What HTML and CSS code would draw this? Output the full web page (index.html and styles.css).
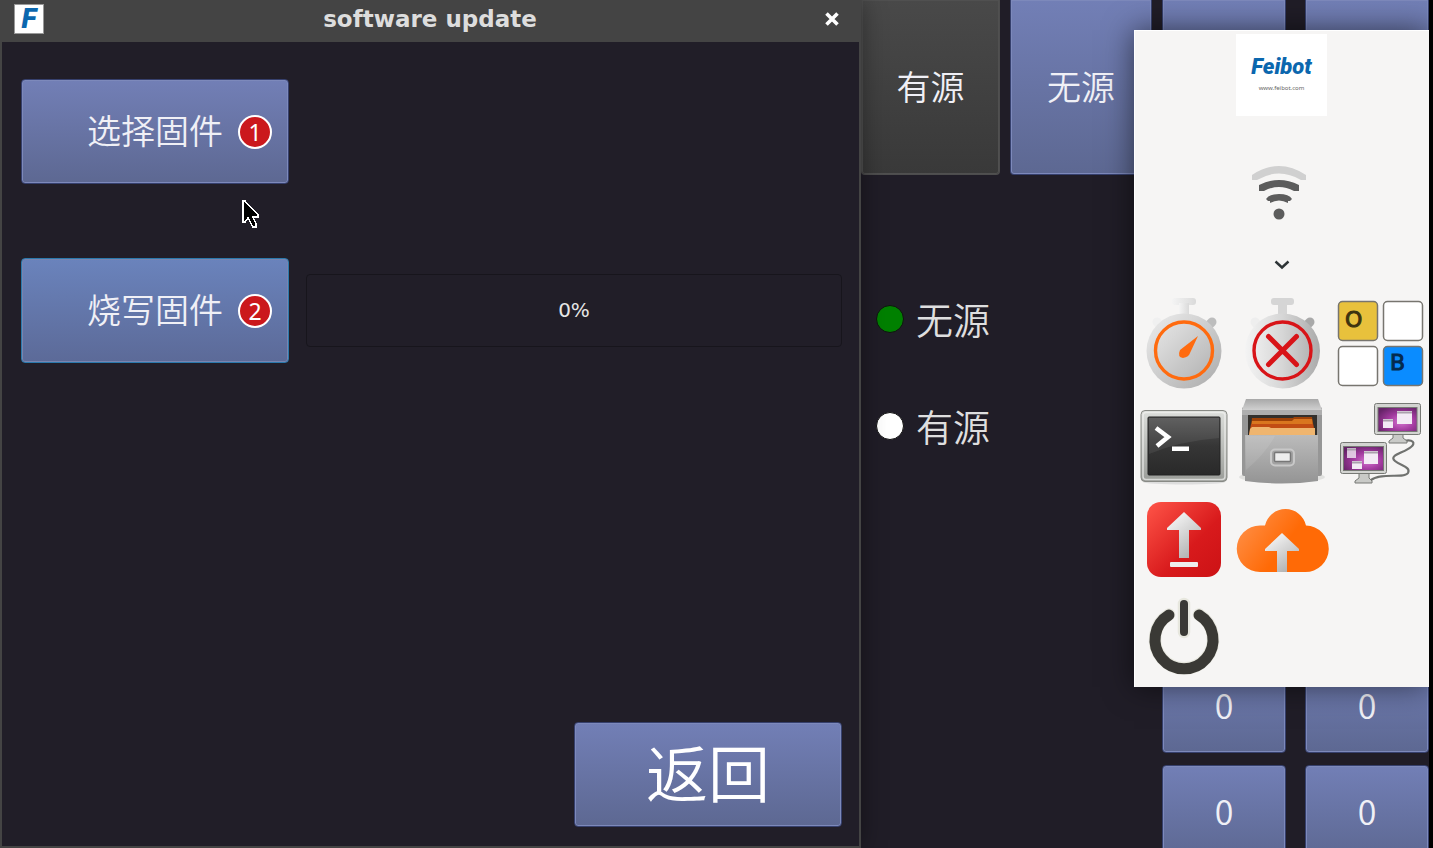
FILE: index.html
```
<!DOCTYPE html>
<html lang="zh-CN">

<head>
    <meta charset="UTF-8">
    <meta name="viewport" content="width=device-width, initial-scale=1.0">
    <title>software update</title>
    <link rel="stylesheet" href="styles.css">
</head>

<body>
    <div class="desktop">
        <section class="window" aria-labelledby="window-title">
            <header class="titlebar">
                <div class="app-icon" aria-hidden="true">F</div>
                <h1 id="window-title">software update</h1>
                <button class="close" type="button" aria-label="Close">
                    <svg width="16" height="16" viewBox="0 0 16 16"><path d="M2.500 2.500L13.500 13.500M13.500 2.500L2.500 13.500" stroke="#fff" stroke-width="3.600"/></svg>
                </button>
            </header>
            <div class="window-body">
                <button class="btn action" type="button">选择固件<span class="badge">1</span></button>
                <div class="flash-row">
                    <button class="btn action focused" type="button">烧写固件<span class="badge">2</span></button>
                    <div class="progress" role="progressbar" aria-valuenow="0" aria-valuemin="0" aria-valuemax="100">0%</div>
                </div>
                <button class="btn action back" type="button">返回</button>
            </div>
            <svg class="cursor" width="18" height="28" viewBox="0 0 18 28" shape-rendering="crispEdges" aria-hidden="true">
                <path d="M1 1V22H3L6 18L11 27H14V24L11 17H16V15L3 1Z" fill="#000" stroke="#fff" stroke-width="1.500"/>
            </svg>
        </section>

        <main class="main">
            <div class="modes">
                <div class="mode-buttons">
                    <button class="btn mode dark" type="button">有源</button>
                    <button class="btn mode" type="button">无源</button>
                </div>
                <div class="radios">
                    <label><input type="radio" name="source" checked>无源</label>
                    <label><input type="radio" name="source">有源</label>
                </div>
            </div>
            <div class="readers">
                <div class="reader-row">
                    <button class="btn mode" type="button" aria-label="Reader 1"></button>
                    <button class="btn mode" type="button" aria-label="Reader 2"></button>
                </div>
                <div class="counts">
                    <button class="btn" type="button">0</button>
                    <button class="btn" type="button">0</button>
                    <button class="btn" type="button">0</button>
                    <button class="btn" type="button">0</button>
                </div>
            </div>

            <aside class="menu">
                <div class="logo">
                    <div class="logo-name">Feibot</div>
                    <div class="logo-url">www.feibot.com</div>
                </div>
                <svg class="wifi" width="98" height="56" viewBox="0 0 98 56" role="img" aria-label="Wi-Fi">
                    <path d="M19 10Q46-8 73 10V15H68Q46 2 24 15H19Z" fill="#d0d0d0"/>
                    <path d="M26 20Q46 10 66 20V26H61Q46 18 31 26H26Z" fill="#5c5c5c"/>
                    <path d="M33 34Q36 29 46 29T59 34L57 36H55V38Q46 33 37 38V36H35Z" fill="#5c5c5c"/>
                    <circle cx="46" cy="49" r="5.500" fill="#5c5c5c"/>
                </svg>
                <button class="expand" type="button" aria-label="More">
                    <svg width="16" height="10" viewBox="0 0 16 10"><path d="M1.500 1.500L8 7.500L14.500 1.500" fill="none" stroke="#2e3436" stroke-width="2.400"/></svg>
                </button>
                <nav class="apps">
                    <button class="app" type="button" aria-label="Timer">
                        <svg viewBox="0 0 98 98">
                            <defs>
                                <linearGradient id="watch" x1="0" y1="0" x2="1" y2="1"><stop offset="0" stop-color="#eee"/><stop offset="1" stop-color="#aaa"/></linearGradient>
                                <linearGradient id="knob" x1="0" x2="1"><stop offset="0" stop-color="#f4f4f4"/><stop offset="1" stop-color="#dadada"/></linearGradient>
                            </defs>
                            <rect x="37" y="3" width="24" height="7" rx="3" fill="url(#knob)"/>
                            <rect x="44" y="8" width="10" height="13" fill="url(#knob)"/>
                            <path d="M71 33L77 27" stroke="#bdbdbd" stroke-width="9" stroke-linecap="round"/>
                            <path d="M27 33L22 27" stroke="#f0f0f0" stroke-width="9" stroke-linecap="round"/>
                            <circle cx="49" cy="56" r="37.500" fill="url(#watch)"/>
                            <circle cx="49" cy="55.500" r="28.500" fill="none" stroke="#ff6b0f" stroke-width="3.400"/>
                            <path d="M63 41L45 55Q42 62 48 63Q54 62 55 58Z" fill="#ff6b0f"/>
                        </svg>
                    </button>
                    <button class="app" type="button" aria-label="Stop timer">
                        <svg viewBox="0 0 98 98">
                            <defs>
                                <linearGradient id="watch2" x1="0" x2="1"><stop offset="0" stop-color="#f4f4f4"/><stop offset=".5" stop-color="#d6d6d6"/><stop offset="1" stop-color="#aaa"/></linearGradient>
                            </defs>
                            <rect x="38" y="3" width="23" height="7" rx="3" fill="#d5d5d5"/>
                            <rect x="45" y="8" width="9" height="13" fill="#d5d5d5"/>
                            <path d="M71 33L77 27" stroke="#a9a9a9" stroke-width="9" stroke-linecap="round"/>
                            <path d="M27 33L22 27" stroke="#eee" stroke-width="9" stroke-linecap="round"/>
                            <circle cx="49.500" cy="56" r="37.500" fill="url(#watch2)"/>
                            <circle cx="49.500" cy="55.500" r="28.500" fill="none" stroke="#d81418" stroke-width="3.400"/>
                            <path d="M35.500 41.500L63.500 69.500M63.500 41.500L35.500 69.500" stroke="#d81418" stroke-width="5" stroke-linecap="round"/>
                        </svg>
                    </button>
                    <button class="app" type="button" aria-label="Onboard keyboard">
                        <svg viewBox="0 0 98 98">
                            <g stroke="#77756f" stroke-width="1.500">
                                <rect x="7.500" y="6.500" width="39" height="39" rx="4" fill="#e8c13c"/>
                                <rect x="52.500" y="6.500" width="39" height="39" rx="4" fill="#fff"/>
                                <rect x="7.500" y="51.500" width="39" height="39" rx="4" fill="#fff"/>
                                <rect x="52.500" y="51.500" width="39" height="39" rx="4" fill="#0a8cff"/>
                            </g>
                            <text class="key" x="14" y="32" fill="#3d330f" stroke="#3d330f">O</text>
                            <text class="key" x="59" y="75" fill="#042a4d" stroke="#042a4d">B</text>
                        </svg>
                    </button>
                    <button class="app" type="button" aria-label="Terminal">
                        <svg viewBox="0 0 98 98">
                            <defs>
                                <linearGradient id="frame" x2="0" y2="1"><stop offset="0" stop-color="#dcdedb"/><stop offset="1" stop-color="#9a9c98"/></linearGradient>
                                <linearGradient id="screen" x2="0" y2="1"><stop offset="0" stop-color="#555"/><stop offset=".5" stop-color="#363636"/><stop offset="1" stop-color="#292929"/></linearGradient>
                            </defs>
                            <ellipse cx="49" cy="89" rx="41" ry="2.500" fill="#ddd"/>
                            <rect x="6" y="17.500" width="86" height="71" rx="4" fill="url(#frame)" stroke="#888a85"/>
                            <rect x="8" y="19.500" width="82" height="67" rx="3" fill="none" stroke="#f2f2f1" stroke-width="1.500" opacity=".7"/>
                            <rect x="13" y="24" width="72" height="58" rx="1" fill="url(#screen)" stroke="#222"/>
                            <path d="M14 25H84V45Q45 48 14 61Z" fill="#fff" opacity=".07"/>
                            <path d="M21 35L33 44L22 53" fill="none" stroke="#fff" stroke-width="4.500"/>
                            <rect x="37" y="53.500" width="17" height="4.500" fill="#fff"/>
                        </svg>
                    </button>
                    <button class="app" type="button" aria-label="Files">
                        <svg viewBox="0 0 98 98">
                            <defs>
                                <linearGradient id="drawer" x2="0" y2="1"><stop offset="0" stop-color="#bbb"/><stop offset="1" stop-color="#949494"/></linearGradient>
                                <linearGradient id="lid" x2="0" y2="1"><stop offset="0" stop-color="#a8a8a8"/><stop offset="1" stop-color="#d0d0d0"/></linearGradient>
                            </defs>
                            <ellipse cx="49" cy="84" rx="43" ry="6" fill="#e1e1df"/>
                            <rect x="9" y="14" width="80" height="69" rx="2" fill="#969696"/>
                            <path d="M13 6H85L89 17H9Z" fill="url(#lid)"/>
                            <rect x="9" y="17" width="80" height="5" fill="#aeaeae"/>
                            <rect x="15" y="22" width="69" height="20" fill="#33302c"/>
                            <path d="M19 25H60L61 24H79L82 42H17Z" fill="#9e4208"/>
                            <path d="M19 28H59L61 26H79L81 42H17Z" fill="#d9761f"/>
                            <path d="M18 31H80L82 42H16Z" fill="#c24d14"/>
                            <path d="M17 36L19 34H36L38 35H82V42H16Z" fill="#efb56f"/>
                            <path d="M12 42H85V88Q49 93 12 88Z" fill="url(#drawer)"/>
                            <path d="M13 43H42Q33 60 13 77Z" fill="#fff" opacity=".09"/>
                            <rect x="38" y="56.500" width="23" height="16" rx="4" fill="#a2a2a2" stroke="#c8c8c8" stroke-width="2"/>
                            <rect x="41.500" y="59.500" width="16" height="9" rx="1" fill="#ededed" stroke="#777" stroke-width="1.500"/>
                        </svg>
                    </button>
                    <button class="app" type="button" aria-label="Remote desktop">
                        <svg viewBox="0 0 98 98">
                            <defs>
                                <radialGradient id="purple" cx=".6" cy=".6" r=".7"><stop offset="0" stop-color="#d572d0"/><stop offset=".5" stop-color="#a23a9f"/><stop offset="1" stop-color="#662368"/></radialGradient>
                            </defs>
                            <path d="M73 48C82 46 85 50 80 54C73 60 57 62 64 68C70 73 80 74 77 80C73 86 51 79 40 87" fill="none" stroke="#70726f" stroke-width="2.200"/>
                            <g stroke="#777975">
                                <path d="M62 40H72V45L76 48V50H58V48L62 45Z" fill="#c9cac7"/>
                                <rect x="43.500" y="10.500" width="46" height="31" rx="2" fill="#d3d4d1"/>
                                <rect x="47" y="14.500" width="39" height="24" fill="url(#purple)"/>
                                <path d="M28 80H38V85L41 88V90H24V88L28 85Z" fill="#c9cac7"/>
                                <rect x="9.500" y="49.500" width="46" height="31" rx="2" fill="#d3d4d1"/>
                                <rect x="12.500" y="53.500" width="40" height="24" fill="url(#purple)"/>
                            </g>
                            <g fill="#f3eaf5">
                                <rect x="66" y="18" width="15" height="13"/>
                                <rect x="52" y="26" width="10" height="9"/>
                                <rect x="16" y="55" width="9" height="10" opacity=".8"/>
                                <rect x="33" y="58" width="14" height="13"/>
                                <rect x="21" y="68" width="10" height="8"/>
                            </g>
                            <path d="M66 19.500H81M52 27.500H62M33 59.500H47M21 69.500H31M16 56.500H25" stroke="#aaa0ac" stroke-width="2"/>
                        </svg>
                    </button>
                    <button class="app" type="button" aria-label="Software update">
                        <svg viewBox="0 0 98 98">
                            <defs>
                                <linearGradient id="red" x2="1" y2="1"><stop offset="0" stop-color="#ff5548"/><stop offset=".6" stop-color="#d81a1c"/><stop offset="1" stop-color="#cc1215"/></linearGradient>
                                <linearGradient id="arrow" x1="0" y1="0" x2=".6" y2="1"><stop offset="0" stop-color="#fff"/><stop offset="1" stop-color="#b4b4b4"/></linearGradient>
                            </defs>
                            <rect x="12" y="11" width="74" height="75" rx="14" fill="url(#red)"/>
                            <path d="M49 21L66 37V39H54V67H44V39H32V37Z" fill="url(#arrow)"/>
                            <rect x="35" y="71" width="28" height="5" rx="1" fill="#eee"/>
                        </svg>
                    </button>
                    <button class="app" type="button" aria-label="Cloud upload">
                        <svg viewBox="0 0 98 98">
                            <defs>
                                <linearGradient id="cloud" x2="1" y2=".5"><stop offset="0" stop-color="#ff9653"/><stop offset=".65" stop-color="#ff6a06"/></linearGradient>
                            </defs>
                            <path d="M27 81A23 23 0 0 1 27 34.500H32A21 21 0 0 1 73 34.500A23 23 0 0 1 72 81Z" fill="url(#cloud)"/>
                            <path d="M49 42L66 58V60H54V81H44V60H32V58Z" fill="url(#arrow)"/>
                        </svg>
                    </button>
                    <button class="app power" type="button" aria-label="Power">
                        <svg viewBox="0 0 98 98">
                            <path d="M34 25.500A29 29 0 1 0 64 25.500M49 15V43" fill="none" stroke="#deddce" stroke-width="12.500" stroke-linecap="round" opacity=".6"/>
                            <path d="M34 26A29 29 0 1 0 64 26" fill="none" stroke="#3a3935" stroke-width="11" stroke-linecap="round"/>
                            <path d="M49 15V43" stroke="#3a3935" stroke-width="8" stroke-linecap="round"/>
                        </svg>
                    </button>
                </nav>
            </aside>
        </main>
    </div>
</body>

</html>
```
FILE: styles.css
```
* {
    box-sizing: border-box;
}

body {
    margin: 0;
    background: #000;
    color: #f0f0f6;
    font-family: "Noto Sans CJK SC", "Noto Sans", sans-serif;
    font-weight: 350;
}

button {
    padding: 0;
    border: none;
    background: none;
    color: inherit;
    font: inherit;
    cursor: pointer;
}

svg {
    display: block;
}

.desktop {
    display: grid;
    grid-template-columns: 1fr 568px;
    height: 100vh;
    min-height: 720px;
    padding-right: 4px;
    overflow: hidden;
}

/* shared raised button */
.btn {
    padding-bottom: 3px;
    border: 1px solid #36406d;
    border-radius: 4px;
    background: linear-gradient(#727fb6, #5d6892);
    box-shadow: inset 0 0 0 1px #7d89bb;
    font-size: 34px;
    line-height: 48px;
}

.btn.dark {
    border-color: #4d4d4d;
    background: linear-gradient(#494949, #393939);
    box-shadow: inset 0 0 0 1px #505050;
}

.btn.focused {
    border-color: #2b79ac;
    background: linear-gradient(#6a83bc, #5c6a98);
    box-shadow: inset 0 0 0 1px #7885b0;
}

/* update window */
.window {
    position: relative;
    z-index: 1;
    display: flex;
    flex-direction: column;
    border: 2px solid #444;
    border-top: none;
    background: #211e28;
    box-shadow: 0 0 24px rgba(0, 0, 0, 0.4);
}

.titlebar {
    display: flex;
    align-items: center;
    height: 42px;
    padding: 0 19px 4px 12px;
    background: #444;
}

.titlebar h1 {
    flex: 1;
    margin: 0;
    padding-right: 8px;
    color: #ddd;
    font: bold 23px/24px "DejaVu Sans", sans-serif;
    text-align: center;
}

.app-icon {
    width: 30px;
    height: 30px;
    border: 1px solid #999;
    background: #fff;
    color: #0b67ae;
    font: italic 900 28px/28px Roboto, sans-serif;
    text-align: center;
}

.window-body {
    flex: 1;
    display: flex;
    flex-direction: column;
    align-items: flex-start;
    padding: 37px 17px 19px 19px;
}

.action {
    position: relative;
    flex: none;
    width: 268px;
    height: 105px;
}

.flash-row {
    display: flex;
    align-items: center;
    gap: 17px;
    width: 100%;
    margin-top: 74px;
}

.progress {
    flex: 1;
    height: 73px;
    border: 1px solid #17151c;
    border-radius: 4px;
    color: #e6e6e6;
    font: 20px/71px "DejaVu Sans", sans-serif;
    text-align: center;
}

.back {
    align-self: flex-end;
    margin-top: auto;
    padding-bottom: 8px;
    color: #fff;
    font-size: 62px;
}

.badge {
    position: absolute;
    top: 35px;
    right: 16px;
    width: 34px;
    height: 34px;
    border: 2px solid #fff;
    border-radius: 50%;
    background: #cb181c;
    color: #fff;
    font: 23px/30px "Noto Sans", sans-serif;
}

.cursor {
    position: absolute;
    top: 200px;
    left: 240px;
}

/* screen behind the window */
.main {
    position: relative;
    display: flex;
    gap: 10px;
    background: #201d27;
    overflow: hidden;
}

.modes {
    flex: 1;
}

.mode-buttons {
    display: grid;
    grid-template-columns: 1fr 142px;
    gap: 10px;
}

.mode {
    height: 175px;
    border-top: none;
    border-radius: 0 0 4px 4px;
}

.radios {
    display: flex;
    flex-direction: column;
    gap: 51px;
    padding: 116px 0 0 15px;
}

.radios label {
    display: flex;
    align-items: center;
    gap: 12px;
    color: #dededf;
    font-size: 37px;
    line-height: 56px;
}

.radios input {
    appearance: none;
    width: 28px;
    height: 28px;
    margin: 0;
    border: 1px solid #111;
    border-radius: 50%;
    background: #fff;
}

.radios input:checked {
    background: #008000;
}

.readers {
    display: flex;
    flex-direction: column;
    justify-content: space-between;
    width: 267px;
}

.reader-row,
.counts {
    display: grid;
    grid-template-columns: 1fr 1fr;
    gap: 12px 19px;
}

/* the last row runs off the bottom of the screen */
.counts {
    grid-auto-rows: 94px;
    margin-bottom: -11px;
}

/* launcher menu */
.menu {
    position: absolute;
    top: 30px;
    right: 0;
    display: flex;
    flex-direction: column;
    align-items: center;
    width: 295px;
    padding-top: 4px;
    background: #f6f5f4;
    box-shadow: inset 1px 1px #fff, 0 0 28px rgba(0, 0, 0, 0.55);
}

.logo {
    width: 91px;
    height: 82px;
    padding-top: 20px;
    background: #fff;
    text-align: center;
}

.logo-name {
    color: #0b67ae;
    font: italic 900 22px/26px Roboto, sans-serif;
}

.logo-url {
    color: #666;
    font: 6px/16px "Noto Sans", sans-serif;
}

.wifi {
    margin-top: 49px;
}

.expand {
    display: flex;
    align-items: center;
    justify-content: center;
    width: 48px;
    height: 48px;
    margin: 20px 0 6px;
}

.apps {
    display: grid;
    grid-template-columns: repeat(3, 98px);
}

.app {
    height: 98px;
}

.power {
    grid-column: 1;
}

.key {
    font: 22px "DejaVu Sans", sans-serif;
}
```
